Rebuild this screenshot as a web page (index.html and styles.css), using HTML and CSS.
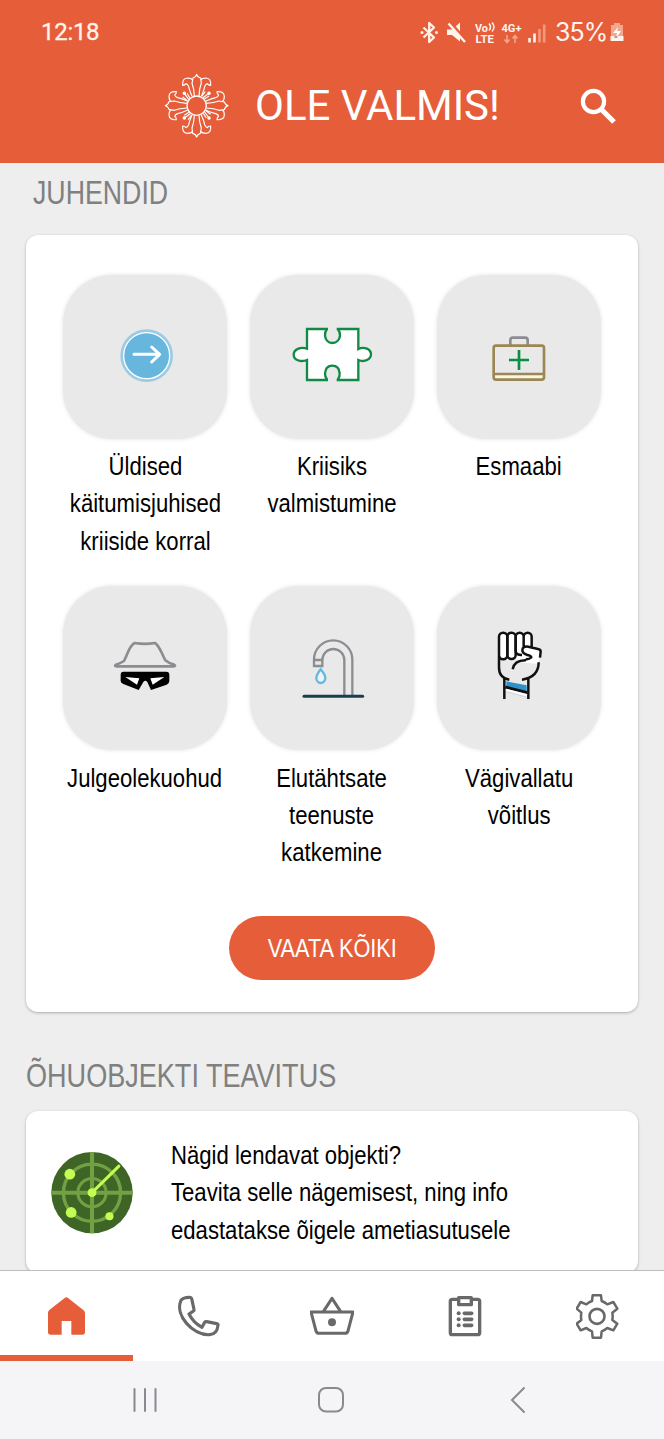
FILE: index.html
```html
<!DOCTYPE html>
<html lang="et">
<head>
<meta charset="utf-8">
<title>Ole valmis!</title>
<link rel="stylesheet" href="styles.css">
</head>
<body>
<div class="app">
  <header class="top">
    <div class="status">
      <span class="clock">12:18</span>
      <svg class="status-icons" viewBox="0 0 140 30" width="140" height="30">
        <path d="M4.500 9.500 15 19.500 10.200 24V5L15 9.500 4.500 19.500" fill="none" stroke="#fff3ec" stroke-width="2.300" stroke-linejoin="round"/>
        <circle cx="3" cy="14.500" r="1.500" fill="#fff3ec"/><circle cx="17.500" cy="14.500" r="1.500" fill="#fff3ec"/>
        <path d="M28 11.500h5l8-7v19l-8-6.500h-5z" fill="#fff3ec"/>
        <path d="M31 4 48 24" stroke="#e65d3a" stroke-width="3"/>
        <path d="M29.500 5.500 46 24" stroke="#fff3ec" stroke-width="2.400"/>
        <text x="56" y="13.500" class="tiny" textLength="13" lengthAdjust="spacingAndGlyphs">Vo</text>
        <path d="M70 5.500q3 3.500 0 7M73 4.500q4 4.500 0 9" stroke="#fff3ec" stroke-width="1.500" fill="none"/>
        <text x="56.500" y="25" class="tiny" textLength="18.500" lengthAdjust="spacingAndGlyphs">LTE</text>
        <text x="82.500" y="14" class="tiny" textLength="20" lengthAdjust="spacingAndGlyphs">4G+</text>
        <path d="M88 17v7M85.500 21.500l2.500 3 2.500-3M96 25v-7M93.500 20.500l2.500-3 2.500 3" stroke="#f3a88f" stroke-width="1.500" fill="none"/>
        <path d="M110.500 20v4.500M115.500 15.500v9" stroke="#fff3ec" stroke-width="2.600"/>
        <path d="M120.500 11v13.500M125.200 6.500v18" stroke="#f0997d" stroke-width="2.600"/>
      </svg>
      <span class="percent">35%</span>
      <svg class="battery" viewBox="0 0 14 20" width="14" height="20">
        <path d="M4 1h6v2h3v14H1V3h3z" fill="#f2a78f"/><path d="M.500 14h13v5h-13z" fill="#fff3ec"/>
        <path d="M8 5 3 11h4l-1 5 5-7H7z" fill="#fff"/><path d="M4.500 15h3" stroke="#8a3b22"/>
      </svg>
    </div>
    <div class="titlebar">
      <svg class="logo" viewBox="42 40 198 198" width="66" height="66">
        <defs>
          <g id="petal">
            <path d="M133 109Q132 86 126 71L129 55Q138 52 140 44Q142 52 152 55L154 71Q148 86 147 109"/>
            <path d="M126 110Q118 92 116 81Q113 73 108 72Q105 77 98 77Q96 56 112 55Q124 55 128 61M154 110Q162 92 164 81Q167 73 172 72Q175 77 182 77Q184 56 168 55Q156 55 152 61"/>
            <path d="M116 119 103 101M120 115 111 101M112 123 98 112"/>
            <circle cx="103" cy="101" r="3.500" fill="#fff"/>
          </g>
        </defs>
        <g fill="none" stroke="#fff" stroke-width="3.500" stroke-linejoin="round">
          <circle cx="140" cy="138" r="29" stroke-width="4"/>
          <use href="#petal"/><use href="#petal" transform="rotate(90 140 138)"/><use href="#petal" transform="rotate(180 140 138)"/><use href="#petal" transform="rotate(270 140 138)"/>
        </g>
      </svg>
      <h1>OLE VALMIS!</h1>
      <svg class="search" viewBox="0 0 38 38" width="38" height="38" fill="none" stroke="#fff" stroke-width="4.200"><circle cx="14.500" cy="14.500" r="10.600"/><path d="m22 22 13 13" stroke-width="5.200"/></svg>
    </div>
  </header>

  <main class="content">
    <h2 class="first-heading"><span class="narrow">JUHENDID</span></h2>
    <section class="card guides">
      <div class="grid">
        <div class="guide">
          <svg class="tile" viewBox="39 45 492 492">
            <circle cx="290" cy="287" r="79" fill="#9bcbe4"/><circle cx="290" cy="287" r="69" fill="#67b6dd" stroke="#fff" stroke-width="4"/>
            <path d="M252 283h75M305 261l24 22-24 23" fill="none" stroke="#fff" stroke-width="9" stroke-linecap="round" stroke-linejoin="round"/>
          </svg>
          <p><span class="narrow">Üldised<br>käitumisjuhised<br>kriiside korral</span></p>
        </div>
        <div class="guide">
          <svg class="tile" viewBox="600 45 492 492">
            <path d="M771 207h58Q824 216 825 226C826 239 834 249 847 249S869 239 870 226Q871 216 865 207h60v60C943 258 963 268 963 283S944 308 925 300v60h-60Q870 351 869 340C868 326 860 317 847 317S826 326 825 340Q824 351 830 360h-59v-60C751 308 731 299 731 284S751 259 771 266Z" fill="#fff"/>
            <path d="M834 207h-63v59C751 259 731 269 731 284S751 308 771 300v60h63M860 360h65v-60C944 308 963 298 963 283S943 258 925 267v-60h-65M831 207Q824 216 825 226C826 239 834 249 847 249S869 239 870 226Q871 216 863 207M832 360Q824 350 825 340C826 326 834 317 847 317S868 326 869 340Q870 350 863 360" fill="none" stroke="#108a45" stroke-width="7"/>
          </svg>
          <p><span class="narrow">Kriisiks<br>valmistumine</span></p>
        </div>
        <div class="guide">
          <svg class="tile" viewBox="51 45 492 492" fill="none" stroke-width="8">
            <path d="M271 255v-14q0-8 8-8h36q8 0 8 8v14" stroke="#8b8d91"/><path d="M224 350h147" stroke="#fbf6df" stroke-width="12"/>
            <rect x="221" y="257" width="151" height="102" rx="7" stroke="#9b8755"/><path d="M223 342h149" stroke="#9b8755" stroke-width="7"/>
            <path d="M297 270v60M267 300h60" stroke="#07903d"/>
          </svg>
          <p><span class="narrow">Esmaabi</span></p>
        </div>
        <div class="guide second-row">
          <svg class="tile" viewBox="39 18 492 492">
            <path d="M199 259Q192 258 198 254Q211 250 222 243C235 217 238 197 254 189Q285 194 315 189C328 196 334 219 346 241Q358 251 372 254Q379 258 371 259Z" fill="none" stroke="#8c8d90" stroke-width="8" stroke-linejoin="round"/>
            <path d="M220 275h129q9 0 9 9v19q0 8-8 11l-47 16-11-24q-6-7-12 0l-14 24-46-18q-8-3-8-9v-19q0-9 8-9z" fill="#000"/>
            <path d="m226 291 42 4-7 19zM343 291l-42 4 7 19z" fill="#fff"/>
          </svg>
          <p><span class="narrow">Julgeolekuohud</span></p>
        </div>
        <div class="guide second-row">
          <svg class="tile" viewBox="0 18 492 492" fill="none" stroke="#8c8d90" stroke-width="7">
            <path d="M307 346V239a57.500 58 0 0 0-115 0v19h25v-18a33 33 0 0 1 66 0v106M192 240h25"/>
            <path d="M162 349h176" stroke="#173f4c" stroke-width="9" stroke-linecap="round"/>
            <path d="M212 268Q199 285 199 294a13.500 15 0 0 0 27 0Q226 285 212 268Z" fill="#eaf5fa" stroke="#64b7e0"/>
          </svg>
          <p><span class="narrow">Elutähtsate<br>teenuste<br>katkemine</span></p>
        </div>
        <div class="guide second-row">
          <svg class="tile" viewBox="21 18 492 492" fill="none" stroke="#111" stroke-width="7.500" stroke-linejoin="round">
            <path d="M208 165q13-15 24 0 13-15 25 0 13-15 24 0 13-15 23 0v38l28 9-7 39-46-3-24-15-15 7-32-2z" fill="#fff" stroke="none"/>
            <rect x="207" y="158" width="25" height="80" rx="12"/><rect x="232" y="158" width="25" height="79" rx="12"/>
            <path d="M276 225q-19 0-19-12v-43a12 12 0 0 1 24 0v34M281 170a12 12 0 0 1 24 0v32M330 233l2-18q0-7-8-8l-29-7q-17-2-18 10 0 10 15 15 11 2 12 7-8 7-17 5"/>
            <path d="M207 228v35q0 30 31 36M326 247q0 45-50 52M248 268q5-28 40-27M223 295v62M295 295v62"/>
            <path d="m229 304 61 12v20l-61-16z" fill="#2f91c9" stroke="none"/><path d="m226 321 66 17" stroke-width="9"/><path d="m229 335 61 17" stroke="#d8d4df" stroke-width="3"/><path d="m228 329 63 17" stroke="#fff" stroke-width="6"/>
          </svg>
          <p><span class="narrow">Vägivallatu<br>võitlus</span></p>
        </div>
      </div>
      <button class="all"><span class="narrow">VAATA KÕIKI</span></button>
    </section>

    <h2 class="second-heading"><span class="narrow">ÕHUOBJEKTI TEAVITUS</span></h2>
    <section class="card report">
      <svg class="radar" viewBox="154 336 244 244" width="82" height="82" fill="none" stroke="#72a144" stroke-width="12">
        <circle cx="276" cy="457" r="121" fill="#3f6526" stroke="none"/>
        <circle cx="276" cy="457" r="85" stroke-width="10"/><circle cx="276" cy="457" r="42" stroke-width="9"/><path d="M276 336v242M155 457h242"/>
        <path d="m276 457 80-79" stroke="#c4fc51" stroke-width="9" stroke-linecap="round"/>
        <g fill="#c4fc51" stroke="none"><circle cx="276" cy="457" r="13"/><circle cx="210" cy="402" r="16"/><circle cx="214" cy="516" r="16"/><circle cx="328" cy="527" r="12"/></g>
      </svg>
      <p><span class="narrow">Nägid lendavat objekti?<br>Teavita selle nägemisest, ning info<br>edastatakse õigele ametiasutusele</span></p>
    </section>
  </main>

  <nav class="tabs">
    <div class="tab active"><svg viewBox="132 75 132 156"><path d="M144 143q0-5 4-8l46-36q5-4 10 0l46 36q5 4 5 9v57q0 8-8 8h-33v-41h-29v41h-33q-8 0-8-8z" fill="#e65d3a"/></svg></div>
    <div class="tab"><svg viewBox="531 75 132 156" fill="none" stroke="#696969" stroke-width="9.500" stroke-linejoin="round"><path d="M543 106Q551 96 570 97q4 0 5 4l7 32q1 4-3 6l-12 8q13 26 39 40l8-15q2-3 6-2l30 6q5 1 4 5-3 27-25 28C579 212 523 150 543 106Z"/></svg></div>
    <div class="tab"><svg viewBox="930 75 132 156" fill="none" stroke="#696969" stroke-width="9" stroke-linejoin="round"><path d="m970 140 26-40 26 40M933 141h126l-15 57q-2 7-9 7h-78q-7 0-9-7z"/><circle cx="996" cy="172" r="12" fill="#696969" stroke="none"/></svg></div>
    <div class="tab"><svg viewBox="339 75 132 156" fill="none" stroke="#696969" stroke-width="10" stroke-linejoin="round"><rect x="361" y="103" width="88" height="106" rx="6"/><path d="M386 98h38v21h-38z" fill="#fff"/><path d="M403 145h22M403 163h22M403 181h22" stroke-width="11" stroke-linecap="round"/><g fill="#696969" stroke="none"><circle cx="386" cy="145" r="6"/><circle cx="386" cy="163" r="6"/><circle cx="386" cy="181" r="6"/></g></svg></div>
    <div class="tab"><svg viewBox="737 75 132 156" fill="none" stroke="#696969" stroke-width="7.500" stroke-linejoin="round"><path d="m787 91h25l2 17q10 4 17 10l18-7 12 20-15 12q2 10 0 22l15 11-12 20-18-7q-8 7-17 10l-2 19h-25l-2-19q-9-3-17-10l-17 7-12-20 14-11q-2-12 0-22l-14-12 12-20 17 7q8-7 17-10z"/><circle cx="800" cy="154" r="22.500" stroke-width="8"/></svg></div>
  </nav>
  <footer class="system">
    <svg viewBox="0 0 26 28" width="26" height="28" stroke="#898a8e" stroke-width="2" stroke-linecap="round"><path d="M2.500 3v22M13 3v22M23.500 3v22"/></svg>
    <svg class="home-key" viewBox="0 0 28 28" width="28" height="28" fill="none" stroke="#898a8e" stroke-width="2"><rect x="2" y="2" width="24" height="23.500" rx="7"/></svg>
    <svg viewBox="0 0 16 28" width="16" height="28" fill="none" stroke="#898a8e" stroke-width="2" stroke-linecap="round"><path d="M14 2 2 14l12 12"/></svg>
  </footer>
</div>
</body>
</html>
```

FILE: styles.css
```css
* { box-sizing: border-box; }
body { margin: 0; background: #eee; font-family: "Liberation Sans", Arial, sans-serif; }
h1, h2, p { margin: 0; font-weight: 400; }
svg { display: block; flex: none; }
.app { width: 664px; height: 1439px; display: flex; flex-direction: column; overflow: hidden; }
.top { height: 163px; flex: none; background: #e65d3a; color: #fff; }
.status { height: 64px; padding: 0 40px 0 41px; display: flex; align-items: center; }
.clock { width: 378px; font: 400 24px/30px Roboto, sans-serif; color: #fff3ec; -webkit-text-stroke: .3px #fff3ec; letter-spacing: -.3px; }
.status-icons { margin-top: 2px; }
.tiny { font: 700 11px Roboto, sans-serif; fill: #fff3ec; }
.percent { width: 50px; margin-left: -4px; font: 400 25px/30px Inter, sans-serif; letter-spacing: -1px; color: #fff3ec; }
.battery { margin-left: 5px; }
.titlebar { height: 84px; padding: 0 47px 0 164px; display: flex; align-items: center; }
.titlebar h1 { margin-left: 25px; font: 400 42px/50px Roboto, sans-serif; white-space: nowrap; }
.search { margin-left: auto; }
.content { flex: 1; min-height: 0; padding: 0 26px; overflow: hidden; }
.narrow { display: inline-block; white-space: nowrap; transform: scaleX(.885); }
h2 { color: #808080; font-size: 33px; line-height: 40px; }
h2 .narrow { transform: scaleX(.82); transform-origin: left; }
.first-heading { padding: 10px 0 0 7px; height: 72px; }
.first-heading .narrow { transform: scaleX(.81); }
.card { background: #fff; border-radius: 12px; box-shadow: 0 1px 3px rgba(0,0,0,.28); }
.guides { height: 777px; padding-top: 40px; display: flex; flex-direction: column; align-items: center; }
.grid { display: grid; grid-template-columns: repeat(3, 187px); grid-auto-rows: 311px; }
.guide { display: flex; flex-direction: column; align-items: center; text-align: center; }
.tile { width: 164px; height: 164px; border-radius: 49px; background: #e9e9e9; box-shadow: 0 0 4px #e2e2e2; }
.guide p { margin-top: 9px; font-size: 25px; line-height: 37.300px; }
.second-row p { margin-top: 9.500px; }
.all { width: 206px; height: 64px; margin-top: 19px; padding: 0; border: 0; border-radius: 32px; background: #e65d3a; color: #fff; font: 26px/64px "Liberation Sans", sans-serif; display: flex; justify-content: center; }
.all .narrow { transform: scaleX(.835); }
.second-heading { padding-top: 44px; height: 99px; }
.report { height: 162px; padding: 26px 0 0 25px; display: flex; }
.radar { margin-top: 15px; }
.report p { margin-left: 38px; font-size: 25px; line-height: 37.300px; }
.report .narrow { transform-origin: left; }
.tabs { height: 91px; flex: none; display: flex; background: #fff; border-top: 1px solid #bdbdbd; }
.tab { flex: 1; display: flex; justify-content: center; padding-top: 19px; border-bottom: 6px solid #fff; }
.tab.active { border-color: #e65d3a; }
.tab svg { width: 44px; height: 52px; }
.system { height: 78px; flex: none; display: flex; align-items: center; justify-content: space-between; padding: 0 138px 0 132px; background: #f5f5f8; }
.home-key { margin-right: 6px; }
```
